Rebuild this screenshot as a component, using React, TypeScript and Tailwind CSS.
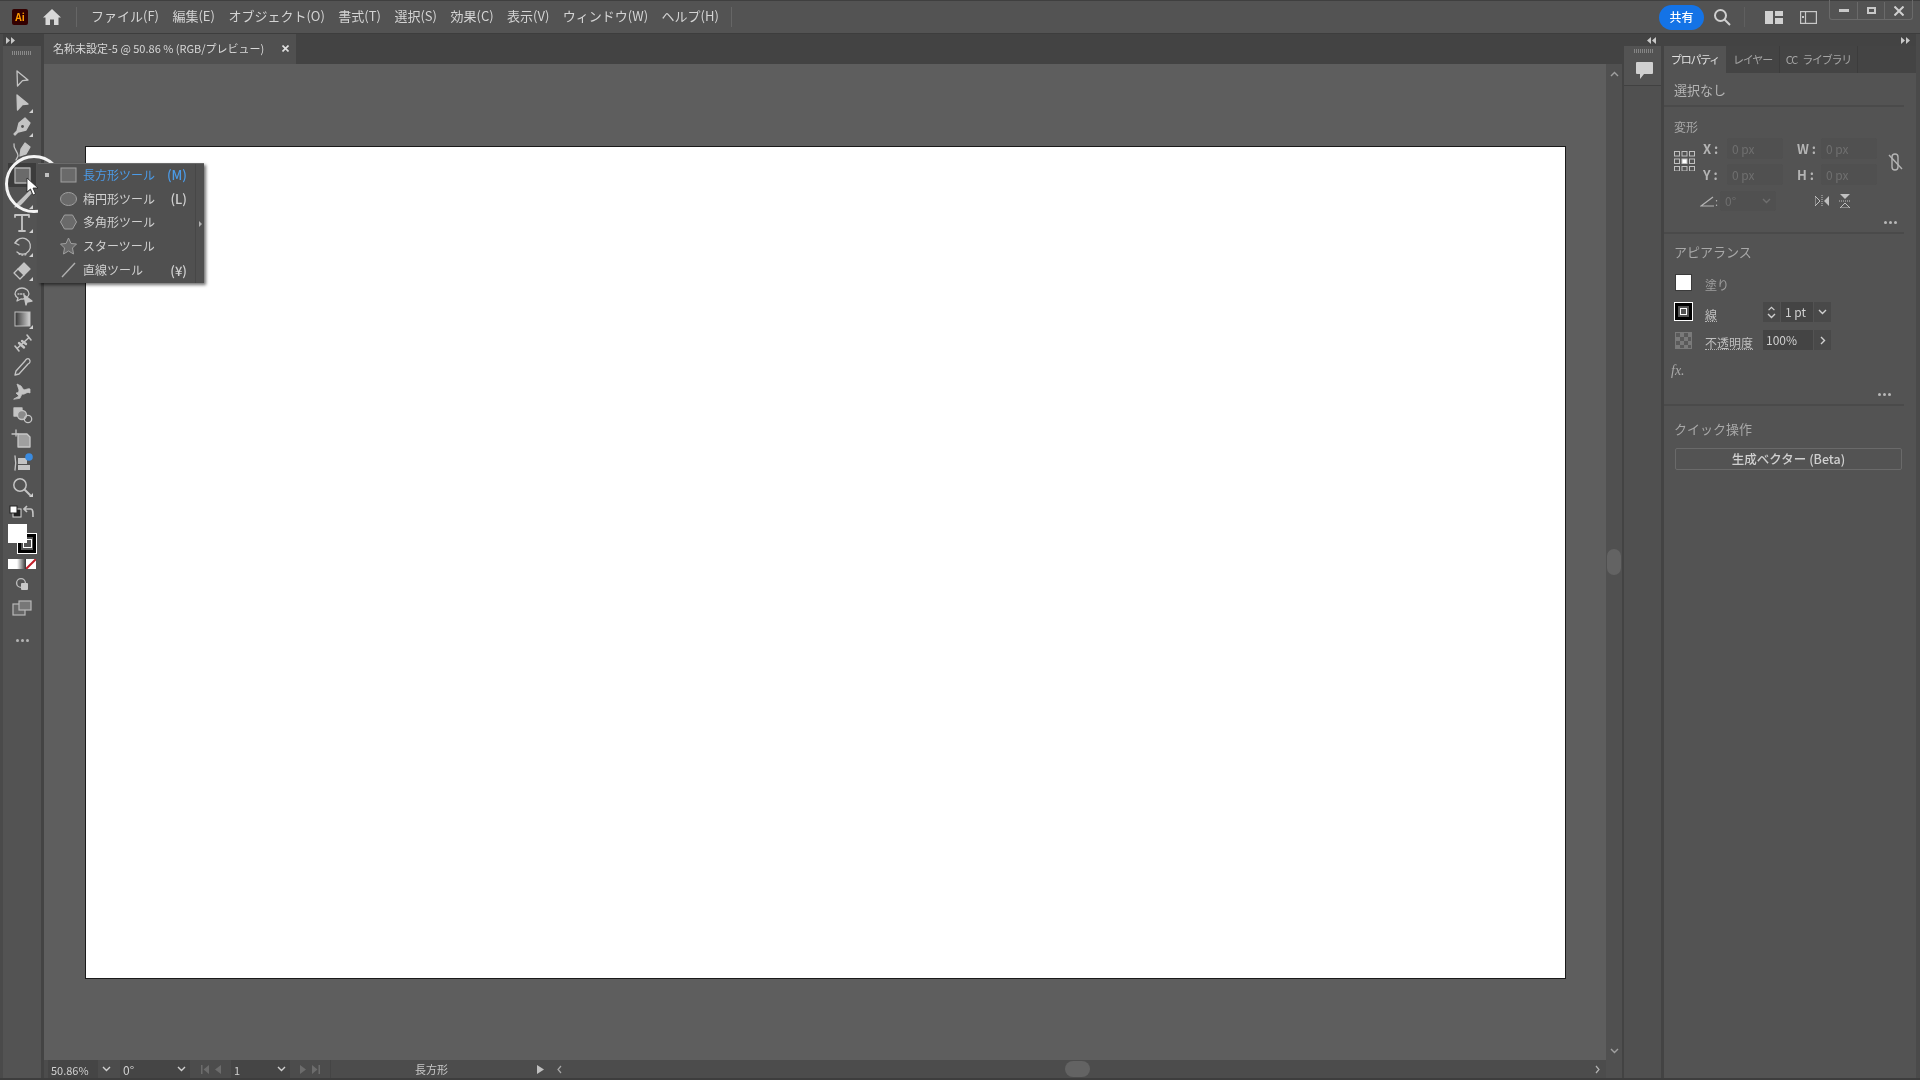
import React from "react";

const font = { fontFamily: '"Noto Sans CJK JP", "Noto Sans", sans-serif' };
const C = "#c4c4c4";

function Tri() {
  return <svg className="absolute right-[3px] bottom-[2px]" width="4" height="4" viewBox="0 0 4 4"><path d="M4 0V4H0Z" fill="#d0d0d0" /></svg>;
}

const S = ({ children }: { children: React.ReactNode }) => (
  <svg width="24" height="24" viewBox="0 0 24 24" fill="none" stroke={C} strokeWidth="1.3" strokeLinejoin="round" strokeLinecap="round">{children}</svg>
);

const tools: { icon: React.ReactNode; tri?: boolean; active?: boolean }[] = [
  { icon: <S><path d="M7 4 L18 13 L12.5 13.6 L7.5 19 Z" /></S> },
  { icon: <S><path d="M7 4 L18 13 L12.5 13.6 L7.5 19 Z" fill={C} /></S>, tri: true },
  { icon: <S><path d="M15 3 L20 8 L16 15 L8 17 L5 20 L4 19 L7 16 L9 8 Z" fill={C} /><circle cx="12.5" cy="11.5" r="1.4" fill="#535353" stroke="none" /></S>, tri: true },
  { icon: <S><path d="M15 4 L20 8 L16 15 L10 17 L11 10 Z" fill={C} /><path d="M4 5 C3 10 8 12 8 17 L6 21" /></S> },
  { icon: <S><rect x="5" y="5" width="15" height="15" fill="#6a6a6a" stroke="#b0b0b0" /></S>, active: true },
  { icon: <S><path d="M20 4 L11 13 L8 16 L5 20 L10 18 L13 15 L21 6 Z" fill={C} /></S>, tri: true },
  { icon: <S><path d="M5 6 V4 H19 V6 M12 4 V20 M9 20 H15" strokeWidth="1.8" /></S>, tri: true },
  { icon: <S><path d="M8 5 L5 8 L9 10" /><path d="M5 8 A8 8 0 1 1 7 17" /><path d="M9 19 A8 8 0 0 0 17 19" strokeDasharray="1 2" /></S>, tri: true },
  { icon: <S><path d="M14 4 L20 10 L14 16 L8 10 Z" fill={C} /><path d="M8 10 L4 14 L10 20 L14 16" /></S>, tri: true },
  { icon: <S><path d="M5 11 A7 6 0 0 1 19 11 A7 6 0 0 1 11 16 L7 18 L8 15 A6 6 0 0 1 5 11 Z" /><path d="M8 11 H15" strokeDasharray="1 1.6" /><path d="M14 12 L22 18 L17 19 L16 22 Z" fill={C} /></S> },
  { icon: <svg width="24" height="24" viewBox="0 0 24 24"><defs><linearGradient id="gr" x1="0" x2="1" y1="0" y2="0"><stop offset="0" stopColor="#333" /><stop offset="1" stopColor="#d4d4d4" /></linearGradient></defs><rect x="5" y="5" width="15" height="14" fill="url(#gr)" stroke="#c0c0c0" /></svg>, tri: true },
  { icon: <S><path d="M5 15 L9 20 M17 4 L21 9 M7 17.5 L19 6.5" strokeWidth="1.6" /><path d="M9 12 L14 16.5 M12 10 L16 13" fill={C} strokeWidth="2.4" /></S> },
  { icon: <S><path d="M19 4 C21 6 20 8 18 9 L9 19 L5 20 L6 16 L15 6 C16 4 18 3 19 4 Z" /></S> },
  { icon: <S><path d="M4 20 L9 17 L6 14 C8 14 9 13 9 11 L7 5 L11 7 L13 10 C15 12 17 9 20 10 L20 14 C17 12 15 16 12 15 L10 19 Z" fill={C} strokeWidth="0.8" /></S> },
  { icon: <S><rect x="4" y="5" width="8" height="8" fill={C} /><circle cx="12" cy="12" r="4.5" fill="#8a8a8a" /><circle cx="18" cy="16" r="3.7" /></S> },
  { icon: <S><path d="M2 7 H8 M6 3 V9" /><path d="M8 7 H17 L20 10 V20 H8 Z" fill="#a0a0a0" stroke="#c8c8c8" /></S> },
  { icon: <S><path d="M5 5 C6 10 6 14 5 19" /><rect x="8" y="7" width="9" height="6" fill={C} stroke="none" /><rect x="8" y="14" width="12" height="5" fill={C} stroke="none" /><circle cx="19" cy="6" r="3.8" fill="#3a8be0" stroke="none" /></S> },
  { icon: <S><circle cx="10" cy="10" r="6.2" strokeWidth="1.5" /><path d="M15 15 L20 20" strokeWidth="2" /></S>, tri: true },
];

function Toolbar() {
  return (
    <div className="flex w-[44px] shrink-0">
      <div className="w-[3px] bg-[#4a4a4a]" />
      <div className="flex w-[38px] flex-col bg-[#535353]">
        <div className="flex h-[12px] items-center bg-[#434343] pl-[3px] text-[8px] leading-none text-[#c8c8c8]">
          <svg width="9" height="7" viewBox="0 0 9 7"><path d="M0 0L4 3.5L0 7ZM5 0L9 3.5L5 7Z" fill="#c8c8c8" /></svg>
        </div>
        <div className="mx-auto mt-[5px] h-[4px] w-[20px] bg-[repeating-linear-gradient(90deg,#8a8a8a_0,#8a8a8a_1px,transparent_1px,transparent_2px)]" />
        <div className="mt-[12px] flex flex-col items-center">
          {tools.map((t, i) => (
            <div key={i} className={`relative flex h-[24px] w-[28px] items-center justify-center ${t.active ? "bg-[#3c3c3c]" : ""}`}>
              {t.icon}
              {t.tri && <Tri />}
            </div>
          ))}
        </div>
        <div className="mt-[5px] flex h-[14px] items-center justify-between px-[6px]">
          <svg width="13" height="13" viewBox="0 0 13 13"><rect x="4" y="4" width="8" height="8" fill="#222" stroke="#ddd" /><rect x="1" y="1" width="7" height="7" fill="#fff" stroke="#222" /></svg>
          <svg width="12" height="13" viewBox="0 0 12 13" fill="none" stroke="#c4c4c4" strokeWidth="1.6"><path d="M1 4 H8 C10 4 10 7 10 12 M4 1 L1 4 L4 7" /></svg>
        </div>
        <div className="relative ml-[5px] mt-[6px] h-[31px] w-[30px]">
          <div className="absolute left-[10px] top-[10px] flex h-[19px] w-[18px] items-center justify-center border-[3px] border-black outline outline-1 outline-white">
            <div className="h-[9px] w-[9px] border border-white" />
          </div>
          <div className="absolute left-0 top-0 h-[19px] w-[19px] bg-white" />
        </div>
        <div className="ml-[5px] mt-[4px] flex h-[10px] w-[28px]">
          <div className="h-full w-[9px] bg-white" />
          <div className="h-full w-[9px] bg-[linear-gradient(90deg,#fff,#333)]" />
          <svg className="h-full w-[10px]" viewBox="0 0 10 10"><rect width="10" height="10" fill="#fff" /><path d="M0 10L10 0" stroke="#c21f2a" strokeWidth="2" /></svg>
        </div>
        <div className="mt-[3px] flex h-[24px] items-center justify-center">
          <svg width="14" height="14" viewBox="0 0 14 14"><circle cx="6" cy="6" r="4.4" fill="none" stroke="#bbb" strokeWidth="1.4" /><rect x="6" y="6" width="7" height="7" rx="1" fill="#c8c8c8" /></svg>
        </div>
        <div className="flex h-[24px] items-center justify-center">
          <svg width="20" height="16" viewBox="0 0 20 16" fill="none" stroke="#b8b8b8" strokeWidth="1.2"><rect x="1" y="4" width="12" height="11" fill="#666" /><rect x="7" y="1" width="12" height="9" fill="#777" /></svg>
        </div>
        <div className="mt-[12px] flex h-[16px] items-center justify-center gap-[2px]">
          {[0, 1, 2].map((i) => <div key={i} className="h-[3px] w-[3px] rounded-full bg-[#b4b4b4]" />)}
        </div>
      </div>
      <div className="w-[3px] bg-[#434343]" />
    </div>
  );
}

function TitleBar() {
  const menus = ["ファイル(F)", "編集(E)", "オブジェクト(O)", "書式(T)", "選択(S)", "効果(C)", "表示(V)", "ウィンドウ(W)", "ヘルプ(H)"];
  return (
    <div className="flex h-[34px] shrink-0 items-center border-b border-[#3d3d3d] border-t border-t-[#3f3f3f] bg-[#535353]">
      <div className="ml-[12px] flex h-[16px] w-[16px] items-center justify-center rounded-[2px] bg-[#330000] text-[10px] font-bold leading-none text-[#ff9a00]">Ai</div>
      <svg className="ml-[14px]" width="20" height="18" viewBox="0 0 20 18"><path d="M10 1 L19 9.5 H16.5 V17 H12 V11.5 H8 V17 H3.5 V9.5 H1 Z" fill="#d8d8d8" /></svg>
      <div className="ml-[14px] h-[20px] w-px bg-[#666]" />
      <div className="ml-[14px] flex -translate-y-[2px] gap-[13.5px] text-[13px] leading-none text-[#d4d4d4]">
        {menus.map((m) => <span key={m} className="whitespace-nowrap">{m}</span>)}
      </div>
      <div className="ml-[12px] h-[20px] w-px bg-[#666]" />
      <div className="flex-1" />
      <div className="flex h-[25px] w-[45px] items-center justify-center rounded-full bg-[#1473e6] text-[12px] font-medium text-white">共有</div>
      <svg className="ml-[9px]" width="18" height="18" viewBox="0 0 18 18" fill="none" stroke="#d0d0d0" strokeWidth="2"><circle cx="7.5" cy="7.5" r="5.5" /><path d="M11.5 11.5 L17 17" /></svg>
      <div className="ml-[13px] h-[20px] w-px bg-[#5f5f5f]" />
      <svg className="ml-[20px]" width="18" height="13" viewBox="0 0 18 13"><path d="M0 0H8V13H0ZM10 0H18V5H10ZM10 7H18V13H10Z" fill="#d0d0d0" /></svg>
      <svg className="ml-[17px]" width="17" height="13" viewBox="0 0 17 13" fill="none" stroke="#c8c8c8" strokeWidth="1.2"><rect x="0.6" y="0.6" width="15.8" height="11.8" /><path d="M5.5 1V12" /><rect x="2" y="5" width="2" height="2" fill="#c8c8c8" stroke="none" /></svg>
      <div className="ml-[12px] flex h-[20px] w-[84px] -translate-y-[7px] rounded-b-[3px] border-x border-b border-[#6a6a6a] pt-[2px]">
        <div className="flex w-[28px] items-center justify-center border-r border-[#6a6a6a]"><div className="h-[3px] w-[10px] bg-[#c8c8c8]" /></div>
        <div className="flex w-[27px] items-center justify-center border-r border-[#6a6a6a]"><div className="h-[7px] w-[9px] border-2 border-[#c8c8c8]" /></div>
        <div className="flex flex-1 items-center justify-center"><svg width="10" height="10" viewBox="0 0 10 10" stroke="#d0d0d0" strokeWidth="2"><path d="M0.5 0.5L9.5 9.5M9.5 0.5L0.5 9.5" /></svg></div>
      </div>
      <div className="w-[7px]" />
    </div>
  );
}

function Flyout() {
  const rows: { label: string; key: string; icon: React.ReactNode; active?: boolean }[] = [
    { label: "長方形ツール", key: "(M)", active: true, icon: <rect x="1" y="2" width="15" height="14" fill="#6a6a6a" stroke="#a0a0a0" /> },
    { label: "楕円形ツール", key: "(L)", icon: <ellipse cx="8.5" cy="9" rx="8" ry="6.5" fill="#6a6a6a" stroke="#a0a0a0" /> },
    { label: "多角形ツール", key: "", icon: <path d="M4.5 2 H12.5 L16.5 9 L12.5 16 H4.5 L0.5 9 Z" fill="#6a6a6a" stroke="#a0a0a0" /> },
    { label: "スターツール", key: "", icon: <path d="M8.5 1 L11 6.5 L16.5 7 L12.5 11 L13.5 17 L8.5 14 L3.5 17 L4.5 11 L0.5 7 L6 6.5 Z" fill="#6a6a6a" stroke="#a0a0a0" /> },
    { label: "直線ツール", key: "(¥)", icon: <path d="M2 16 L15 2" stroke="#b0b0b0" strokeWidth="1.4" /> },
  ];
  return (
    <div className="absolute left-[38px] top-[163px] z-20 flex h-[120px] w-[166px] border-t border-[#6a6a6a] bg-[#505050] shadow-[2px_2px_3px_rgba(0,0,0,0.55)]">
      <div className="flex flex-1 -translate-y-px flex-col">
        {rows.map((r) => (
          <div key={r.label} className="flex h-[24px] items-center text-[12px] leading-none">
            <div className="ml-[7px] w-[15px]">{r.active && <div className="h-[4px] w-[4px] bg-[#c0c0c0]" />}</div>
            <svg width="17" height="18" viewBox="0 0 17 18" fill="none">{r.icon}</svg>
            <span className={`ml-[6px] whitespace-nowrap ${r.active ? "text-[#4b9be8]" : "text-[#d0d0d0]"}`}>{r.label}</span>
            <span className={`ml-auto mr-[8px] text-[13px] font-medium ${r.active ? "text-[#4b9be8]" : "text-[#d0d0d0]"}`}>{r.key}</span>
          </div>
        ))}
      </div>
      <div className="relative w-[9px] border-l border-[#474747]">
        <svg className="absolute left-[3px] top-[57px]" width="3" height="6" viewBox="0 0 3 6"><path d="M0 0L3 3L0 6Z" fill="#b0b0b0" /></svg>
      </div>
    </div>
  );
}

const Chev = ({ c = "#d0d0d0" }: { c?: string }) => (
  <svg width="9" height="6" viewBox="0 0 9 6" fill="none" stroke={c} strokeWidth="1.4"><path d="M1 1 L4.5 4.5 L8 1" /></svg>
);

function StatusBar() {
  return (
    <div className="flex h-[18px] shrink-0 items-center bg-[#4c4c4c] text-[11px] leading-none text-[#d0d0d0]">
      <div className="ml-[4px] flex h-full w-[50px] shrink-0 items-center bg-[#454545] pl-[3px] pt-[2px]">50.86%</div>
      <div className="flex h-full w-[17px] items-center justify-center"><Chev /></div>
      <div className="ml-[5px] flex h-full w-[52px] items-center bg-[#454545] pl-[3px] pt-[2px] text-[12px]">0°</div>
      <div className="flex h-full w-[18px] items-center justify-center bg-[#454545]"><Chev /></div>
      <div className="flex h-full w-[41px] items-center justify-center gap-[6px]">
        <svg width="8" height="9" viewBox="0 0 8 9"><path d="M0 0H1.5V9H0ZM8 0V9L2.5 4.5Z" fill="#6c6c6c" /></svg>
        <svg width="6" height="9" viewBox="0 0 6 9"><path d="M6 0V9L0 4.5Z" fill="#6c6c6c" /></svg>
      </div>
      <div className="flex h-full w-[41px] items-center bg-[#454545] pl-[3px] pt-[2px]">1</div>
      <div className="flex h-full w-[18px] items-center justify-center bg-[#454545]"><Chev /></div>
      <div className="flex h-full w-[40px] items-center justify-center gap-[6px]">
        <svg width="6" height="9" viewBox="0 0 6 9"><path d="M0 0V9L6 4.5Z" fill="#6c6c6c" /></svg>
        <svg width="8" height="9" viewBox="0 0 8 9"><path d="M8 0H6.5V9H8ZM0 0V9L5.5 4.5Z" fill="#6c6c6c" /></svg>
      </div>
      <div className="flex h-full w-[202px] items-center justify-center border-l border-[#454545] pt-[1px] text-[#c8c8c8]">長方形</div>
      <svg className="ml-[5px]" width="7" height="9" viewBox="0 0 7 9"><path d="M0 0V9L7 4.5Z" fill="#c0c0c0" /></svg>
      <svg className="ml-[13px]" width="5" height="9" viewBox="0 0 5 9" fill="none" stroke="#a8a8a8" strokeWidth="1.2"><path d="M4 1L1 4.5L4 8" /></svg>
      <div className="ml-[503px] h-[16px] w-[25px] rounded-full bg-[#636363]" />
      <div className="flex-1" />
      <svg className="mr-[6px]" width="5" height="9" viewBox="0 0 5 9" fill="none" stroke="#b4b4b4" strokeWidth="1.2"><path d="M1 1L4 4.5L1 8" /></svg>
      <div className="h-full w-[16px] bg-[#505050]" />
    </div>
  );
}

function Center() {
  return (
    <div className="flex w-[1578px] shrink-0 flex-col">
      <div className="flex h-[30px] shrink-0 bg-[#434343]">
        <div className="flex w-[252px] items-center bg-[#505050] pb-[1px] pl-[9px] pr-[7px] text-[11px] leading-none text-[#d8d8d8]">
          <span className="whitespace-nowrap">名称未設定-5 @ 50.86 % (RGB/プレビュー)</span>
          <svg className="ml-auto" width="7" height="7" viewBox="0 0 7 7" stroke="#e0e0e0" strokeWidth="1.6"><path d="M0.5 0.5L6.5 6.5M6.5 0.5L0.5 6.5" /></svg>
        </div>
      </div>
      <div className="flex min-h-0 flex-1">
        <div className="min-w-0 flex-1 overflow-hidden bg-[#5e5e5e] pl-[41px] pt-[82px]">
          <div className="h-[833px] w-[1481px] border border-[#1a1a1a] bg-white" />
        </div>
        <div className="flex w-[16px] shrink-0 flex-col items-center bg-[#505050] py-[6px]">
          <svg className="mt-[1px] rotate-180" width="9" height="6" viewBox="0 0 9 6" fill="none" stroke="#a0a0a0" strokeWidth="1.4"><path d="M1 1 L4.5 4.5 L8 1" /></svg>
          <div className="mt-[472px] h-[26px] w-[14px] rounded-full bg-[#636363]" />
          <div className="flex-1" />
          <svg width="9" height="6" viewBox="0 0 9 6" fill="none" stroke="#a0a0a0" strokeWidth="1.4"><path d="M1 1 L4.5 4.5 L8 1" /></svg>
        </div>
      </div>
      <StatusBar />
    </div>
  );
}

const Arrows = ({ flip }: { flip?: boolean }) => (
  <svg className={flip ? "rotate-180" : ""} width="9" height="7" viewBox="0 0 9 7"><path d="M0 0L4 3.5L0 7ZM5 0L9 3.5L5 7Z" fill="#c8c8c8" /></svg>
);

const Dots = ({ cls }: { cls: string }) => (
  <div className={`flex justify-end gap-[2px] ${cls}`}>
    {[0, 1, 2].map((i) => <div key={i} className="h-[3px] w-[3px] rounded-full bg-[#b8b8b8]" />)}
  </div>
);

function Field({ label, v, w = "w-[56px]" }: { label: string; v: string; w?: string }) {
  return (
    <div className="flex items-center">
      <span className="w-[24px] text-[13px] font-bold leading-none text-[#b4b4b4]">{label}</span>
      <div className={`flex h-[21px] ${w} items-center rounded-[2px] bg-[#505050] pl-[5px] text-[12px] text-[#6f6f6f]`}>{v}</div>
    </div>
  );
}

function Right() {
  return (
    <div className="flex min-w-0 flex-1">
      <div className="w-[2px] bg-[#434343]" />
      <div className="flex w-[37px] shrink-0 flex-col bg-[#505050]">
        <div className="flex h-[12px] items-center justify-end bg-[#434343] pr-[5px]"><Arrows flip /></div>
        <div className="flex h-[40px] flex-col items-center border-b border-[#414141] bg-[#535353] pl-[3px]">
          <div className="mt-[3px] h-[4px] w-[20px] bg-[repeating-linear-gradient(90deg,#858585_0,#858585_1px,transparent_1px,transparent_2px)]" />
          <svg className="mt-[8px]" width="19" height="19" viewBox="0 0 19 19"><path d="M2 1 H17 Q18 1 18 2 V12 Q18 13 17 13 H9 L5 18 V13 H2 Q1 13 1 12 V2 Q1 1 2 1Z" fill="#d0d0d0" /></svg>
        </div>
      </div>
      <div className="w-[3px] bg-[#434343]" />
      <div className="flex min-w-0 flex-1 flex-col">
        <div className="flex h-[12px] shrink-0 items-center justify-end bg-[#434343] pr-[6px]"><Arrows /></div>
        <div className="flex h-[27px] shrink-0 whitespace-nowrap bg-[#444444] text-[11px] leading-none tracking-[-1.2px]">
          <div className="flex w-[62px] items-center justify-center bg-[#535353] text-[#e0e0e0]">プロパティ</div>
          <div className="flex w-[54px] items-center justify-center border-r border-[#3c3c3c] text-[#a4a4a4]">レイヤー</div>
          <div className="flex w-[78px] items-center justify-center gap-[5px] border-r border-[#3c3c3c] text-[#a4a4a4]"><span>CC</span><span>ライブラリ</span></div>
        </div>
        <div className="flex-1 bg-[#535353] pl-[10px] pr-[4px] text-[#b4b4b4]">
          <div className="-ml-[10px] mr-[8px] flex h-[34px] items-center border-b-2 border-[#4a4a4a] pl-[10px] text-[13px] leading-none">選択なし</div>
          <div className="mt-[13px] text-[12px] leading-[14px] text-[#a8a8a8]">変形</div>
          <div className="mt-[4px] flex">
            <svg className="mt-[13px]" width="21" height="20" viewBox="0 0 21 20" fill="none" stroke="#c0c0c0" strokeWidth="1">
              {[0, 7.5, 15].map((y) => [0, 7.5, 15].map((x) => <rect key={`${x}-${y}`} x={x + 0.5} y={y + 0.5} width="5" height="4.5" fill={x === 7.5 && y === 7.5 ? "#fff" : "none"} />))}
            </svg>
            <div className="ml-[8px] flex flex-col gap-[5px]">
              <div className="flex gap-[14px]"><Field label="X :" v="0 px" /><Field label="W :" v="0 px" /></div>
              <div className="flex gap-[14px]"><Field label="Y :" v="0 px" /><Field label="H :" v="0 px" /></div>
            </div>
            <svg className="ml-[11px] mt-[15px]" width="15" height="18" viewBox="0 0 15 18" fill="none" stroke="#b4b4b4" strokeWidth="1.4"><rect x="4" y="1" width="6" height="16" rx="3" /><path d="M1 2L14 16" /></svg>
          </div>
          <div className="mt-[5px] flex h-[22px] items-center">
            <svg className="ml-[26px]" width="15" height="11" viewBox="0 0 15 11" fill="none" stroke="#b4b4b4" strokeWidth="1.2"><path d="M13 1L1 10H14" /></svg>
            <span className="text-[11px] leading-none text-[#b4b4b4]">:</span>
            <div className="ml-[2px] flex h-[20px] w-[56px] items-center justify-between rounded-[2px] bg-[#505050] px-[5px] text-[12px] text-[#6f6f6f]">0°<Chev c="#6f6f6f" /></div>
            <svg className="ml-[39px]" width="14" height="12" viewBox="0 0 14 12"><path d="M0 1L5 6L0 11Z" fill="none" stroke="#c0c0c0" /><path d="M14 1L9 6L14 11Z" fill="#c0c0c0" /><path d="M7 0V12" stroke="#c0c0c0" strokeDasharray="1 1" /></svg>
            <svg className="ml-[10px]" width="12" height="14" viewBox="0 0 12 14"><path d="M1 0L6 5L11 0Z" fill="#c0c0c0" /><path d="M1 14L6 9L11 14Z" fill="none" stroke="#c0c0c0" /><path d="M0 7H12" stroke="#c0c0c0" strokeDasharray="1 1" /></svg>
          </div>
          <Dots cls="mt-[9px] mr-[15px]" />
          <div className="-ml-[10px] mr-[8px] mt-[8px] h-[2px] bg-[#4a4a4a]" />
          <div className="mt-[11px] text-[13px] leading-[14px] text-[#a8a8a8]">アピアランス</div>
          <div className="mt-[15px] flex h-[24px] items-start">
            <div className="ml-px h-[17px] w-[17px] border border-[#3a3a3a] bg-white" />
            <span className="ml-[13px] mt-[5px] text-[12px] leading-none text-[#a0a0a0]">塗り</span>
          </div>
          <div className="mt-[5px] flex h-[29px] items-start">
            <div className="ml-px flex h-[17px] w-[17px] items-center justify-center border-[3px] border-black outline outline-1 outline-white"><div className="h-[7px] w-[7px] border border-white" /></div>
            <span className="ml-[13px] mt-[5px] border-b border-dotted border-[#b4b4b4] text-[12px] leading-[13px] text-[#c0c0c0]">線</span>
            <div className="ml-[46px] -mt-[1px] flex h-[20px] items-center rounded-[2px] text-[12px] leading-none text-[#d0d0d0]">
              <div className="flex h-full w-[17px] flex-col items-center justify-center gap-[2px] bg-[#494949]"><svg className="rotate-180" width="9" height="5" viewBox="0 0 9 6" fill="none" stroke="#d0d0d0" strokeWidth="1.4"><path d="M1 1 L4.5 4.5 L8 1" /></svg><Chev /></div>
              <div className="ml-px flex h-full w-[32px] items-center bg-[#444] pl-[4px]">1 pt</div>
              <div className="ml-px flex h-full w-[17px] items-center justify-center bg-[#494949]"><Chev /></div>
            </div>
          </div>
          <div className="flex h-[29px] items-start">
            <div className="ml-px h-[17px] w-[17px] border border-[#7a7a7a] bg-[conic-gradient(#7a7a7a_25%,#5a5a5a_0_50%,#7a7a7a_0_75%,#5a5a5a_0)] bg-[length:8px_8px]" />
            <span className="ml-[13px] mt-[4px] whitespace-nowrap border-b border-dotted border-[#b4b4b4] text-[12px] leading-[13px] text-[#c0c0c0]">不透明度</span>
            <div className="ml-[10px] -mt-[2px] flex h-[20px] items-center text-[12px] leading-none text-[#d0d0d0]">
              <div className="flex h-full w-[50px] items-center bg-[#444] pl-[3px]">100%</div>
              <div className="ml-px flex h-full w-[17px] items-center justify-center bg-[#494949]"><svg width="6" height="9" viewBox="0 0 6 9" fill="none" stroke="#d0d0d0" strokeWidth="1.4"><path d="M1 1L4.5 4.5L1 8" /></svg></div>
            </div>
          </div>
          <div className="-ml-[3px] mt-[3px] text-[14px] italic leading-none text-[#a8a8a8]" style={{ fontFamily: '"Liberation Serif", serif' }}>fx.</div>
          <Dots cls="mt-[15px] mr-[21px]" />
          <div className="-ml-[10px] mr-[8px] mt-[8px] h-[2px] bg-[#4a4a4a]" />
          <div className="mt-[16px] text-[13px] leading-[14px] text-[#a8a8a8]">クイック操作</div>
          <div className="ml-px mt-[12px] flex h-[22px] w-[227px] items-center justify-center rounded-[2px] border border-[#6a6a6a] text-[12.5px] font-medium leading-none text-[#d0d0d0]">生成ベクター (Beta)</div>
        </div>
      </div>
      <div className="w-[4px] bg-[#4a4a4a]" />
    </div>
  );
}

export default function App() {
  return (
    <div className="relative flex h-[1080px] w-[1920px] flex-col overflow-hidden bg-[#474747] blur-[0.35px]" style={font}>
      <TitleBar />
      <div className="flex min-h-0 flex-1">
        <Toolbar />
        <Center />
        <Right />
      </div>
      <div className="h-[2px] shrink-0 bg-[#3d3d3d]" />
      <svg className="pointer-events-none absolute left-[4px] top-[154px] z-10" width="60" height="60" viewBox="0 0 60 60" fill="none" stroke="#f4f4f4" strokeWidth="3"><circle cx="30" cy="30" r="27.5" /></svg>
      <Flyout />
      <svg className="pointer-events-none absolute left-[26px] top-[177px] z-30" width="13" height="20" viewBox="0 0 13 20"><path d="M1 1 V15 L4.5 12 L7 18 L9.5 17 L7 11 H12 Z" fill="#fff" stroke="#222" strokeWidth="0.8" /></svg>
    </div>
  );
}
